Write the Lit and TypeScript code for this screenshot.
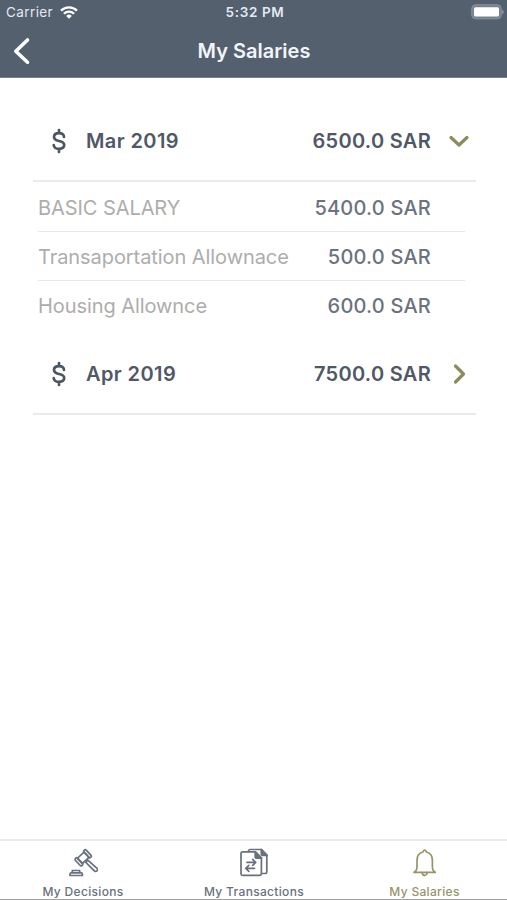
import { LitElement, html, css, svg } from "lit";
import { customElement, property, state } from "lit/decorators.js";
import { classMap } from "lit/directives/class-map.js";

interface Item { label: string; amount: string; }
interface Salary { month: string; total: string; items: Item[]; }

const SALARIES: Salary[] = [
  {
    month: "Mar 2019",
    total: "6500.0 SAR",
    items: [
      { label: "BASIC SALARY", amount: "5400.0 SAR" },
      { label: "Transaportation Allownace", amount: "500.0 SAR" },
      { label: "Housing Allownce", amount: "600.0 SAR" },
    ],
  },
  { month: "Apr 2019", total: "7500.0 SAR", items: [] },
];

const gavel = svg`
  <g transform="translate(15.2 9.800) rotate(-43)">
    <rect x="-4.600" y="-3.600" width="9.200" height="7.200"/>
    <rect x="-7.400" y="-4.800" width="3" height="9.600" rx="1.200"/>
    <rect x="4.400" y="-4.800" width="3" height="9.600" rx="1.200"/>
  </g>
  <path d="M17.800 14.300l2-2.200 9.300 8.200a1.900 1.900 0 0 1-2.500 2.800z"/>
  <path d="M4.300 22.500h7.400v2.300H4.300zM3 24.800h10.200a1.200 1.200 0 0 1 1.200 1.200v1.500H2V26a1.200 1.200 0 0 1 1-1.200z"/>`;

const papers = svg`
  <path d="M9.5 3.600V3.200a1.700 1.700 0 0 1 1.700-1.700h11.300l5.300 5.600v16.700a1.700 1.700 0 0 1-1.700 1.700h-3.400"/>
  <path d="M3.800 3.800h12.600l6 6.200v15.600a1.800 1.800 0 0 1-1.800 1.800H3.800A1.800 1.800 0 0 1 2 25.600V5.600a1.800 1.800 0 0 1 1.800-1.800z"/>
  <path class="solid" d="M16.200 3.800v5.200a1.200 1.200 0 0 0 1.200 1.200h5.200zM22.300 1.500v4.700a1.200 1.200 0 0 0 1.200 1.200h4.600z"/>
  <path d="M8 14.300h8.500M13.700 11.300l3 3-3 3M15.500 20.300H7M9.800 17.300l-3 3 3 3"/>`;

const bell = svg`
  <path d="M4 24.300c2.200-.9 3-2.600 3-5.500v-6.500c0-4.600 2.600-7.500 6-8.300.4-1.200.9-1.800 1.700-1.800s1.300.6 1.700 1.800c3.400.8 6 3.700 6 8.300v6.500c0 2.900.8 4.600 3 5.500z"/>
  <path d="M12.200 24.500a2.500 2.800 0 0 0 5 0"/>`;

@customElement("status-bar")
class StatusBar extends LitElement {
  static styles = css`
    :host { display: grid; grid-template-columns: 1fr auto 1fr; align-items: center; height: 24px; padding: 0 3px 0 6px; color: #e3e9f1; font-size: 13.5px; }
    .carrier { display: flex; align-items: center; gap: 7px; letter-spacing: 0.4px; }
    .time { font-weight: 600; letter-spacing: 0.65px; font-size: 13.5px; }
    .battery { justify-self: end; display: block; }
    .wifi { display: block; }
  `;
  render() {
    return html`
      <div class="carrier"><span>Carrier</span>
        <svg class="wifi" width="18" height="13" viewBox="0 0 18 13" fill="none" stroke="#fff" stroke-width="2.300">
          <path d="M1 4.700a11.500 11.500 0 0 1 16 0M3.900 7.800a7.300 7.300 0 0 1 10.200 0"/>
          <path fill="#fff" stroke="none" d="M9 12.800L6.200 9.900a4 4 0 0 1 5.600 0z"/>
        </svg>
      </div>
      <div class="time">5:32 PM</div>
      <svg class="battery" width="33" height="16" viewBox="0 0 33 16">
        <rect x=".7" y=".7" width="29.600" height="14.200" rx="4" fill="#76828f" stroke="#84909b"/>
        <rect x="3" y="3.200" width="25" height="9.400" rx="1.500" fill="#fff"/>
        <path d="M31.200 5.500c2 .8 2 4 0 4.800z" fill="#8b96a1"/>
      </svg>`;
  }
}

@customElement("salary-card")
class SalaryCard extends LitElement {
  @property({ attribute: false }) salary!: Salary;
  @property({ type: Boolean }) open = false;
  static styles = css`
    :host { display: block; color: #505867; }
    .head { box-sizing: border-box; height: 83px; margin: 0 31px 0 33px; padding: 2px 6px 0 18px; border-bottom: 2px solid #ebebeb; display: flex; align-items: center; font-size: 20px; font-weight: 600; letter-spacing: 0.28px; cursor: pointer; }
    .dollar { width: 16px; height: 26px; margin-right: 19px; }
    .month { flex: 1; letter-spacing: 0.4px; }
    .chevron { width: 22px; height: 22px; margin-left: 17px; }
    .icon { fill: none; stroke-linecap: round; stroke-linejoin: round; display: block; }
    .items { margin: 0 42px 3px 38px; }
    .item { box-sizing: border-box; height: 49px; padding: 1px 34px 0 0; display: flex; justify-content: space-between; align-items: center; font-size: 20px; }
    .item:first-child { padding-top: 2px; }
    .item + .item { border-top: 1px solid #e6e6e6; }
    .label { color: #adadad; letter-spacing: -0.07px; }
    .amount { color: #6b7280; font-weight: 500; letter-spacing: 0.2px; }
  `;
  render() {
    return html`
      <div class="head">
        <svg class="icon dollar" viewBox="0 0 16 26" stroke="#4b5563" stroke-width="2.700">
          <path d="M8 2v3.200M8 20.800V24M13 8.800C12.700 6.500 11 5.200 8 5.200S3 6.700 3 9.100s1.800 3.300 5 3.900 5.200 1.500 5.200 4-2.200 3.800-5.200 3.800-5.100-1.300-5.300-3.800"/>
        </svg>
        <span class="month">${this.salary.month}</span>
        <span>${this.salary.total}</span>
        <svg class="icon chevron" viewBox="0 0 22 22" stroke="#8d8a5b" stroke-width="3.200">
          <path d=${this.open ? "M3 7.500l8 7.500 8-7.500" : "M7.500 3l8 8-8 8"}/>
        </svg>
      </div>
      ${this.open ? html`<div class="items">
        ${this.salary.items.map((i) => html`<div class="item"><span class="label">${i.label}</span><span class="amount">${i.amount}</span></div>`)}
      </div>` : ""}`;
  }
}

@customElement("app-root")
class AppRoot extends LitElement {
  @state() private opened = 0;
  private tabs = [
    { name: "My Decisions", icon: gavel, active: false },
    { name: "My Transactions", icon: papers, active: false },
    { name: "My Salaries", icon: bell, active: true },
  ];
  static styles = css`
    :host { display: flex; flex-direction: column; height: 900px; background: #fff; font-family: Inter, "Liberation Sans", sans-serif; overflow: hidden; }
    header { box-sizing: border-box; height: 78px; background: #54606e; border-bottom: 1px solid #77808a; }
    .nav { height: 53px; display: grid; grid-template-columns: 44px 1fr 44px; align-items: center; }
    .back { display: block; margin-left: 11px; }
    h1 { margin: 0; padding-left: 1px; text-align: center; font-size: 20px; font-weight: 600; color: #f1f5fb; }
    main { flex: 1; padding-top: 21px; }
    footer { box-sizing: border-box; height: 61px; border-top: 2px solid #ebebeb; border-bottom: 1px solid #a0a0a0; display: grid; grid-template-columns: 166px 176px 165px; }
    .tab { display: flex; flex-direction: column; align-items: center; padding-top: 7px; color: #69717c; font-size: 12px; font-weight: 500; letter-spacing: 0.32px; line-height: 15px; white-space: nowrap; }
    .tab.active { color: #98946a; }
    .glyph { width: 30px; height: 30px; margin-bottom: 6px; fill: none; stroke: currentColor; stroke-width: 1.700; stroke-linejoin: round; stroke-linecap: round; }
    .solid { fill: currentColor; }
  `;
  render() {
    return html`
      <header>
        <status-bar></status-bar>
        <div class="nav">
          <svg class="back" width="22" height="30" viewBox="0 0 22 30" fill="none" stroke="#fff" stroke-width="3.600" stroke-linecap="round" stroke-linejoin="round"><path d="M16.500 4L4.800 15.200l11.700 11"/></svg>
          <h1>My Salaries</h1>
        </div>
      </header>
      <main>
        ${SALARIES.map((s, i) => html`<salary-card .salary=${s} ?open=${this.opened === i} @click=${() => (this.opened = this.opened === i ? -1 : i)}></salary-card>`)}
      </main>
      <footer>
        ${this.tabs.map((t) => html`<div class=${classMap({ tab: true, active: t.active })}>
          <svg class="glyph" viewBox="0 0 30 30">${t.icon}</svg><span>${t.name}</span></div>`)}
      </footer>`;
  }
}
